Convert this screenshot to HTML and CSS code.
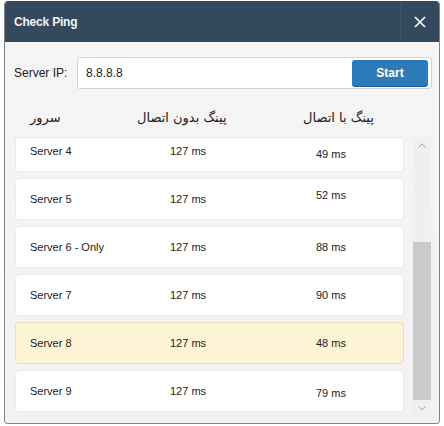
FILE: index.html
```html
<!DOCTYPE html>
<html>
<head>
<meta charset="utf-8">
<link rel="stylesheet" href="styles.css">
</head>
<body>
<div class="window">
  <div class="titlebar">
    <div class="title">Check Ping</div>
    <div class="close">
      <svg width="12" height="12" viewBox="0 0 12 12"><path d="M1 1 L11 11 M11 1 L1 11" stroke="#ffffff" stroke-width="1.6" fill="none"/></svg>
    </div>
  </div>
  <div class="content">
    <div class="ip-row">
      <span class="ip-label">Server IP:</span>
      <div class="ip-box">
        <span class="ip-value">8.8.8.8</span>
        <button class="start">Start</button>
      </div>
    </div>
    <div class="head">
      <span class="h1">سرور</span>
      <span class="h2">پینگ بدون اتصال</span>
      <span class="h3">پینگ با اتصال</span>
    </div>
    <div class="list-area">
      <div class="list">
        <div class="row clipped"><span>Server 4</span><span>127 ms</span><span class="low">49 ms</span></div>
        <div class="row"><span>Server 5</span><span>127 ms</span><span class="high">52 ms</span></div>
        <div class="row"><span>Server 6 - Only</span><span>127 ms</span><span>88 ms</span></div>
        <div class="row"><span>Server 7</span><span>127 ms</span><span>90 ms</span></div>
        <div class="row selected"><span>Server 8</span><span>127 ms</span><span>48 ms</span></div>
        <div class="row"><span>Server 9</span><span>127 ms</span><span class="low">79 ms</span></div>
      </div>
      <div class="scrollbar">
        <div class="arrow"><svg width="8" height="5" viewBox="0 0 8 5"><path d="M0.5 4.5 L4 1 L7.5 4.5" stroke="#a8a8a8" stroke-width="1" fill="none"/></svg></div>
        <div class="track"><div class="thumb" style="margin-top:88px;height:158px"></div></div>
        <div class="arrow"><svg width="8" height="5" viewBox="0 0 8 5"><path d="M0.5 0.5 L4 4 L7.5 0.5" stroke="#a8a8a8" stroke-width="1" fill="none"/></svg></div>
      </div>
    </div>
  </div>
</div>
</body>
</html>
```

FILE: styles.css
```css
html, body {
  margin: 0;
  padding: 0;
  background: #ffffff;
}
body {
  font-family: "Liberation Sans", Arial, sans-serif;
  color: #222;
}
.window {
  box-sizing: border-box;
  width: 436px;
  height: 423px;
  margin: 1px 0 0 4px;
  border: 1px solid #7d8288;
  border-top-color: #34485e;
  border-radius: 4px;
  overflow: hidden;
  background: #f4f4f4;
  display: flex;
  flex-direction: column;
}
.titlebar {
  height: 40px;
  flex: none;
  background: #34485e;
  display: flex;
  align-items: center;
}
.title {
  flex: 1;
  padding-left: 9px;
  color: #f2f4f7;
  font-size: 12px;
  font-weight: bold;
  letter-spacing: -0.2px;
}
.close {
  width: 38px;
  height: 40px;
  border-left: 1px solid #3e5168;
  display: flex;
  align-items: center;
  justify-content: center;
}
.content {
  flex: 1;
  display: flex;
  flex-direction: column;
  padding: 15px 7px 0 9px;
  background: linear-gradient(#f5f5f5, #f2f2f2);
}
.ip-row {
  display: flex;
  align-items: center;
  height: 32px;
}
.ip-label {
  width: 63px;
  font-size: 12px;
  color: #222;
}
.ip-box {
  box-sizing: border-box;
  flex: 1;
  height: 32px;
  background: #fff;
  border: 1px solid #d2d2d2;
  border-radius: 3px;
  display: flex;
  align-items: center;
  padding: 2px 3px 2px 8px;
}
.ip-value {
  flex: 1;
  font-size: 12px;
  color: #222;
}
.start {
  box-sizing: border-box;
  width: 76px;
  height: 27px;
  border: none;
  border-bottom: 1px solid #1c5d8e;
  border-radius: 3px;
  background: #2c7bb8;
  color: #fff;
  font-family: "Liberation Sans", Arial, sans-serif;
  font-size: 12px;
  font-weight: bold;
  padding: 0;
}
.head {
  height: 48px;
  box-sizing: border-box;
  padding-top: 20px;
  display: grid;
  grid-template-columns: 107px 166px 1fr;
  padding-left: 16px;
  font-family: "DejaVu Sans", sans-serif;
  font-size: 13px;
  line-height: 17px;
  color: #222;
}
.head span {
  justify-self: start;
}
.list-area {
  display: flex;
  padding-left: 1px;
  gap: 9px;
}
.list {
  width: 389px;
  display: flex;
  flex-direction: column;
  gap: 6px;
}
.row {
  box-sizing: border-box;
  height: 42px;
  background: #fff;
  border: 1px solid #ebebeb;
  border-radius: 4px;
  display: grid;
  grid-template-columns: 140px 146px 1fr;
  align-items: center;
  padding-left: 14px;
  font-size: 11px;
  color: #222;
}
.row.clipped {
  height: 35px;
  border-top-left-radius: 3px;
  border-top-right-radius: 3px;
  padding-bottom: 8px;
}
.row.clipped .low {
  padding-top: 6px;
}
.row.selected {
  background: #fdf3d5;
  border-color: #eadcb4;
}
.row .high {
  padding-bottom: 8px;
}
.row .low {
  padding-top: 4px;
}
.scrollbar {
  width: 18px;
  height: 280px;
  background: #efefef;
  display: flex;
  flex-direction: column;
}
.arrow {
  height: 17px;
  display: flex;
  align-items: center;
  justify-content: center;
}
.track {
  flex: 1;
  display: flex;
  flex-direction: column;
}
.thumb {
  background: #cacaca;
}
```
